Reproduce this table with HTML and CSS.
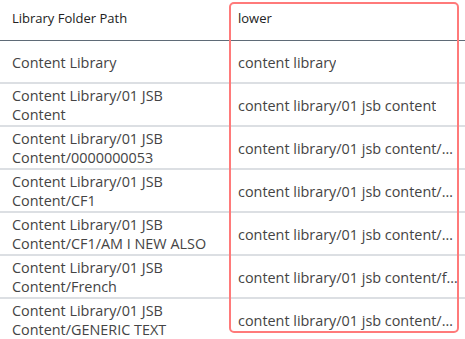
FILE: index.html
```html
<!DOCTYPE html>
<html>
<head>
<meta charset="utf-8">
<link rel="stylesheet" href="styles.css">
</head>
<body>
<div class="grid">
  <div class="row head">
    <div class="cell c1">Library Folder Path</div>
    <div class="cell c2">lower</div>
  </div>
  <div class="row single">
    <div class="cell c1">Content Library</div>
    <div class="cell c2"><span class="trunc">content library</span></div>
  </div>
  <div class="row">
    <div class="cell c1">Content Library/01 JSB Content</div>
    <div class="cell c2"><span class="trunc">content library/01 jsb content</span></div>
  </div>
  <div class="row">
    <div class="cell c1">Content Library/01 JSB Content/0000000053</div>
    <div class="cell c2"><span class="trunc">content library/01 jsb content/0000000053</span></div>
  </div>
  <div class="row">
    <div class="cell c1">Content Library/01 JSB Content/CF1</div>
    <div class="cell c2"><span class="trunc">content library/01 jsb content/cf1</span></div>
  </div>
  <div class="row">
    <div class="cell c1">Content Library/01 JSB Content/CF1/AM I NEW ALSO</div>
    <div class="cell c2"><span class="trunc">content library/01 jsb content/cf1/am i new also</span></div>
  </div>
  <div class="row">
    <div class="cell c1">Content Library/01 JSB Content/French</div>
    <div class="cell c2"><span class="trunc">content library/01 jsb content/french</span></div>
  </div>
  <div class="row">
    <div class="cell c1">Content Library/01 JSB Content/GENERIC TEXT</div>
    <div class="cell c2"><span class="trunc">content library/01 jsb content/generic text</span></div>
  </div>
  <div class="highlight"></div>
</div>
</body>
</html>
```
FILE: styles.css
```css
html, body {
  margin: 0;
  padding: 0;
  background: #fff;
}
body {
  width: 465px;
  height: 339px;
  overflow: hidden;
  font-family: "Open Sans", "Noto Sans", sans-serif;
}
.grid {
  position: relative;
  width: 465px;
}
.row {
  display: grid;
  grid-template-columns: 230px 235px;
  border-bottom: 2px solid #dcdfe3;
  min-height: 40px;
}
.row.single {
  min-height: 41px;
}
.row.head {
  height: 40px;
  min-height: 40px;
  border-bottom: 1px solid #5f6b77;
}
.cell {
  display: flex;
  align-items: center;
  padding: 2px 12px 1px;
  font-size: 14.4px;
  line-height: 19px;
  color: #444;
  min-width: 0;
}
.cell.c1 {
  padding-right: 20px;
}
.cell.c2 {
  padding-left: 8px;
  padding-right: 7px;
}
.head .cell {
  font-size: 13px;
  color: #222;
  padding-top: 0;
  padding-bottom: 3px;
}
.trunc {
  display: block;
  white-space: nowrap;
  overflow: hidden;
  text-overflow: ellipsis;
  min-width: 0;
}
.highlight {
  position: absolute;
  left: 229px;
  top: 2px;
  width: 226px;
  height: 327px;
  border: 2px solid #ff7a7a;
  border-radius: 5px;
}
```
